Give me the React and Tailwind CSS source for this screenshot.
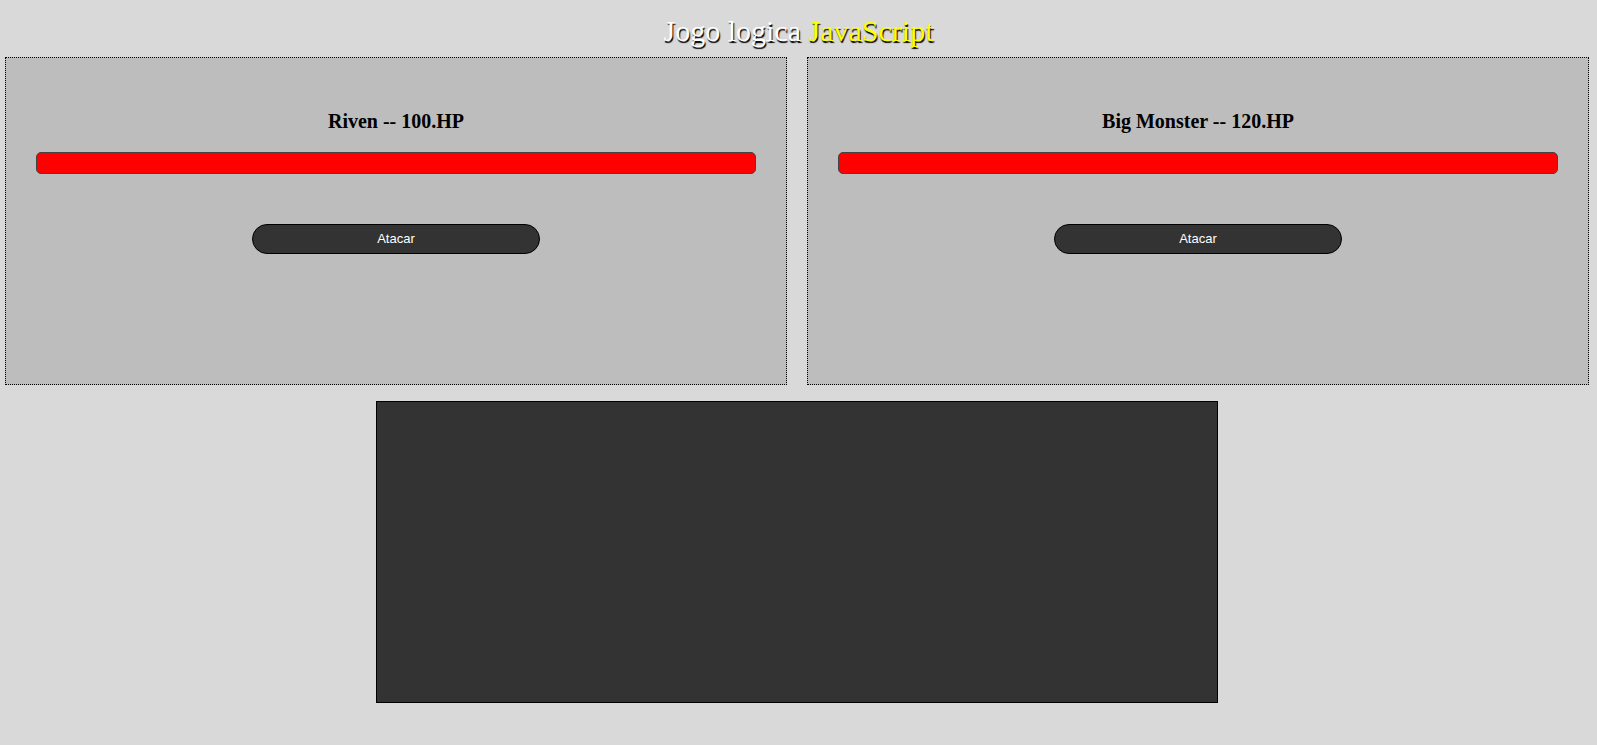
export default function App() {
  const players = [
    { name: "Riven", hp: 100 },
    { name: "Big Monster", hp: 120 },
  ];

  return (
    <div className="min-h-[745px] bg-[#d9d9d9] font-['Liberation_Serif',serif]">
      <h1 className="pt-[14px] h-[57px] text-center text-[30px] leading-[34px] text-white [text-shadow:1px_2px_1px_#000]">
        Jogo logica <span className="text-[#ffff00]">JavaScript</span>
      </h1>

      <div className="flex gap-[20px] pl-[5px]">
        {players.map((p) => (
          <div
            key={p.name}
            className="w-[782px] h-[328px] border border-dotted border-black bg-[#bdbdbd] px-[30px] pt-[51px]"
          >
            <h2 className="text-center text-[20px] font-bold leading-[24px] text-black">
              {p.name} -- {p.hp}.HP
            </h2>
            <div className="mt-[19px] h-[22px] w-full rounded-[5px] border border-[#444] bg-[#ff0000]" />
            <div className="mt-[50px] flex justify-center">
              <button className="h-[30px] w-[288px] rounded-full border border-black bg-[#333333] font-['Liberation_Sans',sans-serif] text-[13px] text-white">
                Atacar
              </button>
            </div>
          </div>
        ))}
      </div>

      <div className="mt-[16px] ml-[376px] h-[302px] w-[842px] border border-black bg-[#333333]" />
    </div>
  );
}
